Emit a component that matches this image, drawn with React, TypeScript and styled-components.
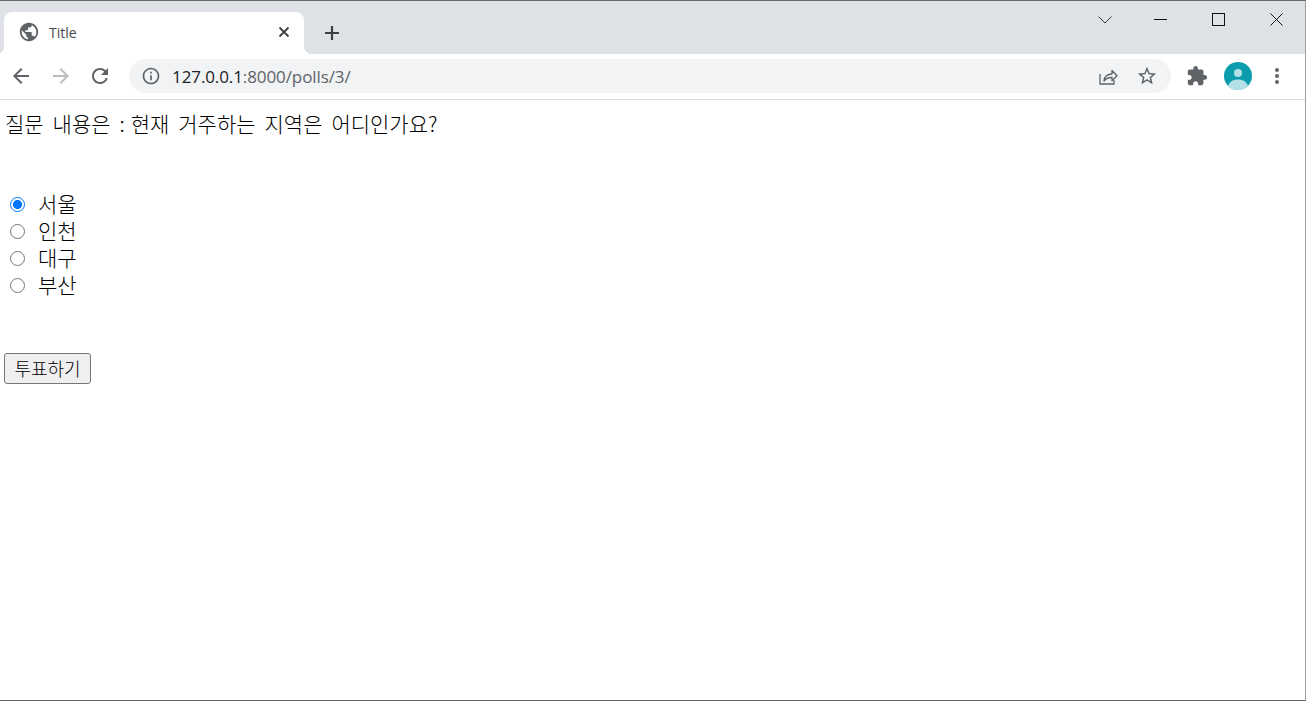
import styled, { createGlobalStyle } from "styled-components";

const GlobalStyle = createGlobalStyle`
  html, body {
    margin: 0;
    padding: 0;
    height: 100%;
    background: #ffffff;
  }
  #root {
    height: 100%;
  }
`;

const Frame = styled.div`
  width: 1306px;
  height: 701px;
  box-sizing: border-box;
  border-top: 1px solid #63676b;
  border-bottom: 1px solid #63676b;
  border-right: 1px solid #9a9da1;
  display: flex;
  flex-direction: column;
  overflow: hidden;
`;

const TabStrip = styled.div`
  height: 53px;
  flex: none;
  background: #dee1e6;
  display: flex;
  align-items: flex-end;
  padding-left: 4px;
`;

const Tab = styled.div`
  position: relative;
  width: 300px;
  height: 42px;
  box-sizing: border-box;
  background: #ffffff;
  border-radius: 8px 8px 0 0;
  display: flex;
  align-items: center;
  padding: 0 14px 2px 14px;
  &::before,
  &::after {
    content: "";
    position: absolute;
    bottom: 0;
    width: 8px;
    height: 8px;
  }
  &::before {
    left: -8px;
    background: radial-gradient(circle at 0 0, #dee1e6 8px, #ffffff 8.5px);
  }
  &::after {
    right: -8px;
    background: radial-gradient(circle at 100% 0, #dee1e6 8px, #ffffff 8.5px);
  }
`;

const TabTitle = styled.span`
  flex: 1;
  margin-left: 9px;
  font: 14px "Open Sans", "Noto Sans", sans-serif;
  color: #45474a;
`;

const NewTab = styled.div`
  margin: 0 0 5px 20px;
  height: 32px;
  display: flex;
  align-items: center;
`;

const WindowControls = styled.div`
  margin-left: auto;
  align-self: flex-start;
  display: flex;
  align-items: center;
  height: 37px;
`;

const WindowButton = styled.div<{ $width: number }>`
  width: ${(p) => p.$width}px;
  display: flex;
  justify-content: center;
`;

const Toolbar = styled.div`
  height: 46px;
  flex: none;
  box-sizing: border-box;
  background: #ffffff;
  border-bottom: 1px solid #dadce0;
  display: flex;
  align-items: center;
  padding: 0 16px 1px 1px;
`;

const NavButton = styled.div`
  width: 40px;
  display: flex;
  justify-content: center;
`;

const Omnibox = styled.div`
  margin-left: 9px;
  width: 1042px;
  height: 34px;
  flex: none;
  box-sizing: border-box;
  border-radius: 17px;
  background: #f1f3f4;
  display: flex;
  align-items: center;
  padding: 0 13px 0 12px;
`;

const Url = styled.div`
  flex: 1;
  margin-left: 11px;
  font: 17px "Open Sans", "Noto Sans", sans-serif;
  letter-spacing: -0.1px;
  color: #5f6368;
`;

const Host = styled.span`
  color: #202124;
`;

const OmniActions = styled.div`
  display: flex;
  align-items: center;
  gap: 17px;
`;

const ToolActions = styled.div`
  margin-left: 15px;
  display: flex;
  align-items: center;
  gap: 13px;
`;

const Extensions = styled.div`
  display: flex;
  margin-right: 3px;
`;

const Page = styled.form`
  flex: 1;
  padding: 9px 0 0 4px;
  font: 300 21px "Noto Sans CJK KR", sans-serif;
  color: #000000;
`;

const Question = styled.div`
  height: 28px;
  line-height: 28px;
  padding-left: 1px;
  word-spacing: 4.3px;
  white-space: pre;
`;

const Colon = styled.span`
  word-spacing: 1.3px;
`;

const Choices = styled.div`
  margin-top: 54px;
  display: flex;
  flex-direction: column;
`;

const Choice = styled.label`
  height: 27px;
  display: flex;
  align-items: center;
  line-height: 27px;
`;

const ChoiceText = styled.span`
  padding-bottom: 2px;
`;

const Radio = styled.input`
  appearance: none;
  width: 15px;
  height: 15px;
  margin: 0 13px 0 6px;
  box-sizing: border-box;
  border: 1.4px solid #767676;
  border-radius: 50%;
  background: #ffffff;
  &:checked {
    border: 1.6px solid #0075ff;
    background: radial-gradient(circle, #0075ff 4.2px, #ffffff 4.8px);
  }
`;

const Vote = styled.button`
  display: block;
  margin-top: 54px;
  width: 87px;
  height: 31px;
  padding: 0 0 2px;
  box-sizing: border-box;
  background: #efefef;
  border: 1px solid #767676;
  border-radius: 3px;
  font: 300 18px "Noto Sans CJK KR", sans-serif;
  color: #000000;
`;

function Icon({ d, size = 24, fill = "#5f6368" }: { d: string; size?: number; fill?: string }) {
  return (
    <svg width={size} height={size} viewBox="0 0 24 24" fill={fill}>
      <path d={d} />
    </svg>
  );
}

const choices = ["서울", "인천", "대구", "부산"];

export default function App() {
  return (
    <Frame>
      <GlobalStyle />
      <TabStrip>
        <Tab>
          <Icon
            size={22}
            d="M12 2C6.48 2 2 6.48 2 12s4.48 10 10 10 10-4.48 10-10S17.52 2 12 2zm-1 17.93c-3.95-.49-7-3.85-7-7.93 0-.62.08-1.21.21-1.79L9 15v1c0 1.1.9 2 2 2v1.93zm6.9-2.54c-.26-.81-1-1.39-1.9-1.39h-1v-3c0-.55-.45-1-1-1H8v-2h2c.55 0 1-.45 1-1V7h2c1.1 0 2-.9 2-2v-.41c2.93 1.19 5 4.06 5 7.41 0 2.08-.8 3.97-2.1 5.39z"
          />
          <TabTitle>Title</TabTitle>
          <svg width="12" height="12" viewBox="0 0 12 12" fill="none" stroke="#3c4043" strokeWidth="1.8">
            <path d="M1.5 1.5l9 9M10.5 1.5l-9 9" />
          </svg>
        </Tab>
        <NewTab>
          <svg width="16" height="16" viewBox="0 0 16 16" fill="none" stroke="#3c4043" strokeWidth="2.2">
            <path d="M8 1v14M1 8h14" />
          </svg>
        </NewTab>
        <WindowControls>
          <WindowButton $width={54}>
            <svg width="14" height="8" viewBox="0 0 14 8" fill="none" stroke="#3a3a3a" strokeWidth="1">
              <path d="M.5.5L7 7l6.5-6.5" />
            </svg>
          </WindowButton>
          <WindowButton $width={57}>
            <svg width="13" height="1" viewBox="0 0 13 1">
              <rect width="13" height="1" fill="#111" />
            </svg>
          </WindowButton>
          <WindowButton $width={58}>
            <svg width="13" height="13" viewBox="0 0 13 13" fill="none" stroke="#111" strokeWidth="1">
              <rect x=".5" y=".5" width="12" height="12" />
            </svg>
          </WindowButton>
          <WindowButton $width={58}>
            <svg width="13" height="13" viewBox="0 0 13 13" fill="none" stroke="#111" strokeWidth="1">
              <path d="M.5.5l12 12M12.5.5l-12 12" />
            </svg>
          </WindowButton>
        </WindowControls>
      </TabStrip>
      <Toolbar>
        <NavButton>
          <Icon d="M20 11H7.83l5.59-5.59L12 4l-8 8 8 8 1.41-1.41L7.83 13H20v-2z" />
        </NavButton>
        <NavButton>
          <Icon fill="#babcbe" d="M4 11h12.17l-5.59-5.59L12 4l8 8-8 8-1.41-1.41L16.17 13H4v-2z" />
        </NavButton>
        <NavButton>
          <Icon d="M17.65 6.35A7.958 7.958 0 0 0 12 4c-4.42 0-7.99 3.58-7.99 8s3.57 8 7.99 8c3.73 0 6.84-2.55 7.73-6h-2.08A5.99 5.99 0 0 1 12 18c-3.31 0-6-2.69-6-6s2.69-6 6-6c1.66 0 3.14.69 4.22 1.78L13 11h7V4l-2.35 2.35z" />
        </NavButton>
        <Omnibox>
          <Icon
            size={20}
            d="M11 7h2v2h-2zm0 4h2v6h-2zm1-9C6.48 2 2 6.48 2 12s4.48 10 10 10 10-4.48 10-10S17.52 2 12 2zm0 18c-4.41 0-8-3.59-8-8s3.59-8 8-8 8 3.59 8 8-3.59 8-8 8z"
          />
          <Url>
            <Host>127.0.0.1</Host>:8000/polls/3/
          </Url>
          <OmniActions>
            <svg width="22" height="22" viewBox="0 0 22 22" fill="none" stroke="#5f6368" strokeWidth="1.3">
              <path d="M3 9v10h14v-4" />
              <path d="M7 16c.5-4.5 3.5-7 8-7V5.5l5 5.3-5 5V12.5c-3.5-.2-6 1-8 3.5z" strokeLinejoin="round" />
            </svg>
            <Icon
              size={22}
              d="M22 9.24l-7.19-.62L12 2 9.19 8.63 2 9.24l5.46 4.73L5.82 21 12 17.27 18.18 21l-1.63-7.03L22 9.24zM12 15.4l-3.76 2.27 1-4.28-3.32-2.88 4.38-.38L12 6.1l1.71 4.04 4.38.38-3.32 2.88 1 4.28L12 15.4z"
            />
          </OmniActions>
        </Omnibox>
        <ToolActions>
          <Extensions>
            <Icon
              size={22}
              d="M20.5 11H19V7c0-1.1-.9-2-2-2h-4V3.5C13 2.12 11.88 1 10.5 1S8 2.12 8 3.5V5H4c-1.1 0-1.99.9-1.99 2v3.8H3.5c1.49 0 2.7 1.21 2.7 2.7s-1.21 2.7-2.7 2.7H2V20c0 1.1.9 2 2 2h3.8v-1.5c0-1.49 1.21-2.7 2.7-2.7 1.49 0 2.7 1.21 2.7 2.7V22H17c1.1 0 2-.9 2-2v-4h1.5c1.38 0 2.5-1.12 2.5-2.5S21.88 11 20.5 11z"
            />
          </Extensions>
          <svg width="28" height="28" viewBox="0 0 28 28">
            <circle cx="14" cy="14" r="14" fill="#0b9dae" />
            <circle cx="14" cy="11" r="4" fill="#b2e0e6" />
            <path d="M4 24c1.5-4.5 5.5-6.5 10-6.5s8.5 2 10 6.5a14 14 0 0 1-20 0z" fill="#b2e0e6" />
          </svg>
          <svg width="24" height="24" viewBox="0 0 24 24" fill="#5f6368">
            <circle cx="12" cy="6" r="2" />
            <circle cx="12" cy="12" r="2" />
            <circle cx="12" cy="18" r="2" />
          </svg>
        </ToolActions>
      </Toolbar>
      <Page>
        <Question>
          질문 내용은 <Colon>: </Colon>현재 거주하는 지역은 어디인가요?
        </Question>
        <Choices>
          {choices.map((choice, index) => (
            <Choice key={choice}>
              <Radio type="radio" name="choice" defaultChecked={index === 0} />
              <ChoiceText>{choice}</ChoiceText>
            </Choice>
          ))}
        </Choices>
        <Vote type="button">투표하기</Vote>
      </Page>
    </Frame>
  );
}
